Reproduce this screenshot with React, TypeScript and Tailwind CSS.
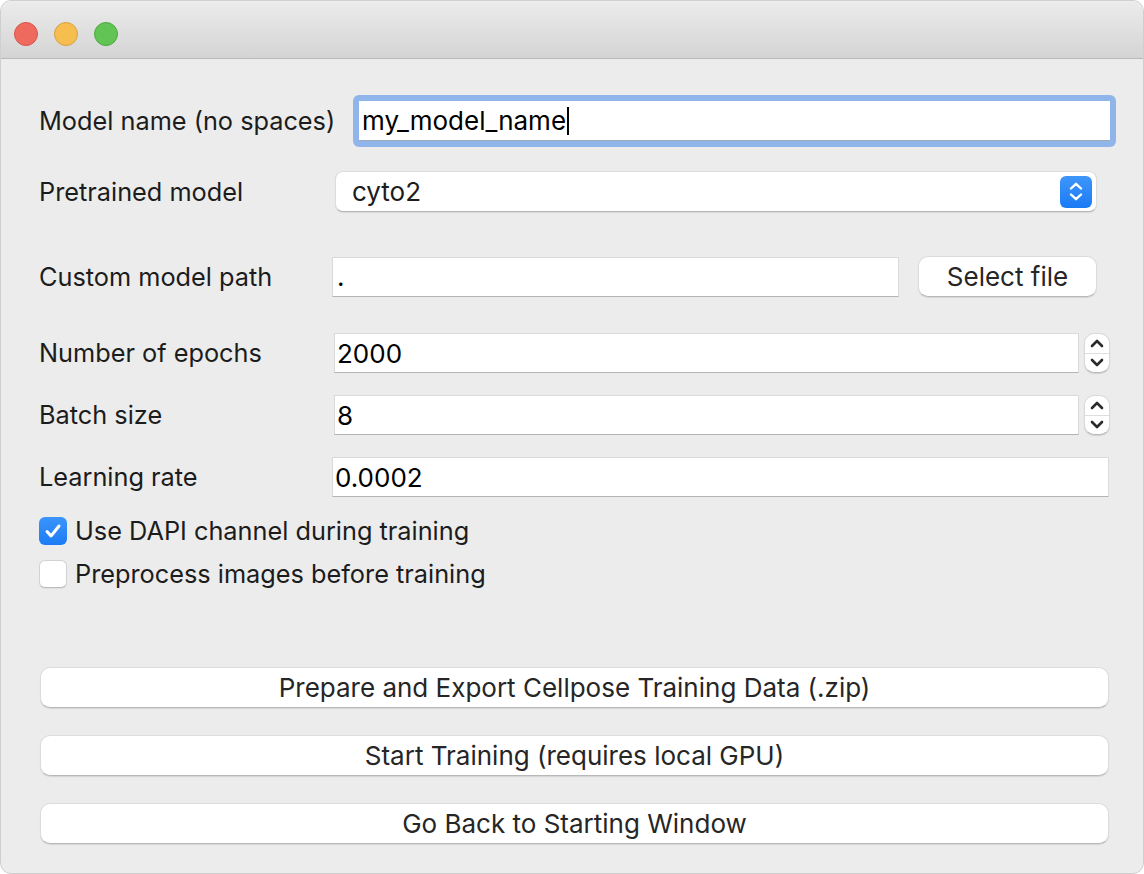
import React from "react";

const font = { fontFamily: "Inter, 'Noto Sans', 'Liberation Sans', sans-serif" };

function Spinner() {
  return (
    <div className="ml-[5px] flex h-[40px] w-[26px] flex-col overflow-hidden rounded-[10px] border border-[#d9d9d9] border-b-[#b9b9b9] bg-white shadow-[0_1px_1px_rgba(0,0,0,0.12)]">
      <div className="flex flex-1 items-center justify-center border-b border-[#dedede]">
        <svg width="14" height="9" viewBox="0 0 14 9">
          <path d="M2 7 L7 2 L12 7" fill="none" stroke="#2a2a2a" strokeWidth="2.6" strokeLinecap="round" strokeLinejoin="round" />
        </svg>
      </div>
      <div className="flex flex-1 items-center justify-center">
        <svg width="14" height="9" viewBox="0 0 14 9">
          <path d="M2 2 L7 7 L12 2" fill="none" stroke="#2a2a2a" strokeWidth="2.6" strokeLinecap="round" strokeLinejoin="round" />
        </svg>
      </div>
    </div>
  );
}

const fieldCls =
  "flex h-[40px] items-center border border-[#dadada] border-b-[#b4b4b4] bg-white text-[26px] text-black";

const btnCls =
  "flex items-center justify-center rounded-[10px] border border-[#dcdcdc] border-b-[#b8b8b8] bg-white text-[26px] text-[#262626] shadow-[0_1px_1px_rgba(0,0,0,0.10)]";

export default function App() {
  return (
    <div className="h-[874px] w-[1144px] bg-white" style={font}>
      <div className="flex h-[874px] w-[1144px] flex-col overflow-hidden rounded-[11px] border border-[#cfcfcf] bg-[#ececec]">
        {/* Title bar */}
        <div className="flex h-[58px] shrink-0 items-center gap-[16px] border-b border-[#b9b9b9] bg-gradient-to-b from-[#ececec] to-[#d4d4d4] pl-[13px] pt-[8px]">
          <div className="h-[24px] w-[24px] rounded-full border border-[#d9544b] bg-[#ef6a5e]" />
          <div className="h-[24px] w-[24px] rounded-full border border-[#d9a13f] bg-[#f5be4f]" />
          <div className="h-[24px] w-[24px] rounded-full border border-[#4fa83f] bg-[#61c454]" />
        </div>

        <div className="flex flex-col pl-[38px] text-[25.3px] text-[#1c1c1c]">
          {/* Row 1 */}
          <div className="mt-[36px] flex h-[52px] items-center">
            <div className="w-[314px] shrink-0">Model name (no spaces)</div>
            <div className="h-[52px] w-[763px] rounded-[6px] bg-[#90b5ea] p-[6px]">
              <div className="flex h-full items-center border-b border-[#9fa9b5] bg-white pl-[3px] text-[26px] text-black">
                <span>my_model_name</span>
                <span className="ml-[1px] inline-block h-[28px] w-[2px] bg-black" />
              </div>
            </div>
          </div>

          {/* Row 2 */}
          <div className="mt-[24px] flex h-[41px] items-center">
            <div className="w-[296px] shrink-0">Pretrained model</div>
            <div className="flex h-[41px] w-[762px] items-center justify-between rounded-[8px] border border-[#dcdcdc] border-b-[#b6b6b6] bg-white pl-[16px] pr-[4px] text-[26px] text-[#1c1c1c] shadow-[0_1px_1px_rgba(0,0,0,0.08)]">
              <span>cyto2</span>
              <div className="flex h-[32px] w-[32px] flex-col items-center justify-center gap-[3px] rounded-[6px] bg-gradient-to-b from-[#3d96fb] to-[#1a7bf5]">
                <svg width="14" height="8" viewBox="0 0 14 8">
                  <path d="M2 6.5 L7 1.8 L12 6.5" fill="none" stroke="white" strokeWidth="2.4" strokeLinecap="round" strokeLinejoin="round" />
                </svg>
                <svg width="14" height="8" viewBox="0 0 14 8">
                  <path d="M2 1.5 L7 6.2 L12 1.5" fill="none" stroke="white" strokeWidth="2.4" strokeLinecap="round" strokeLinejoin="round" />
                </svg>
              </div>
            </div>
          </div>

          {/* Row 3 */}
          <div className="mt-[44px] flex h-[41px] items-center">
            <div className="w-[293px] shrink-0">Custom model path</div>
            <div className={fieldCls + " w-[567px] pl-[4px]"}>.</div>
            <div className={btnCls + " ml-[19px] h-[41px] w-[179px]"}>Select file</div>
          </div>

          {/* Row 4 */}
          <div className="mt-[36px] flex h-[40px] items-center">
            <div className="w-[295px] shrink-0">Number of epochs</div>
            <div className={fieldCls + " h-[36px] w-[745px] pl-[2px]"}>2000</div>
            <Spinner />
          </div>

          {/* Row 5 */}
          <div className="mt-[22px] flex h-[40px] items-center">
            <div className="w-[295px] shrink-0">Batch size</div>
            <div className={fieldCls + " h-[36px] w-[745px] pl-[2px]"}>8</div>
            <Spinner />
          </div>

          {/* Row 6 */}
          <div className="mt-[22px] flex h-[40px] items-center">
            <div className="w-[293px] shrink-0">Learning rate</div>
            <div className={fieldCls + " w-[777px] pl-[2px]"}>0.0002</div>
          </div>

          {/* Checkbox 1 */}
          <div className="mt-[20px] flex h-[28px] items-center">
            <div className="flex h-[28px] w-[28px] items-center justify-center rounded-[6px] bg-gradient-to-b from-[#3a94fb] to-[#1b7cf5]">
              <svg width="18" height="16" viewBox="0 0 18 16">
                <path d="M3 8.5 L7 13 L15 3" fill="none" stroke="white" strokeWidth="3" strokeLinecap="round" strokeLinejoin="round" />
              </svg>
            </div>
            <span className="ml-[8px]">Use DAPI channel during training</span>
          </div>

          {/* Checkbox 2 */}
          <div className="mt-[15px] flex h-[28px] items-center">
            <div className="h-[28px] w-[28px] rounded-[6px] border border-[#d2d2d2] border-b-[#bcbcbc] bg-white shadow-[0_1px_1px_rgba(0,0,0,0.06)]" />
            <span className="ml-[8px]">Preprocess images before training</span>
          </div>

          {/* Buttons */}
          <div className={btnCls + " ml-[1px] mt-[79px] h-[41px] w-[1069px]"}>
            Prepare and Export Cellpose Training Data (.zip)
          </div>
          <div className={btnCls + " ml-[1px] mt-[27px] h-[41px] w-[1069px]"}>
            Start Training (requires local GPU)
          </div>
          <div className={btnCls + " ml-[1px] mt-[27px] h-[41px] w-[1069px]"}>
            Go Back to Starting Window
          </div>
        </div>
      </div>
    </div>
  );
}
